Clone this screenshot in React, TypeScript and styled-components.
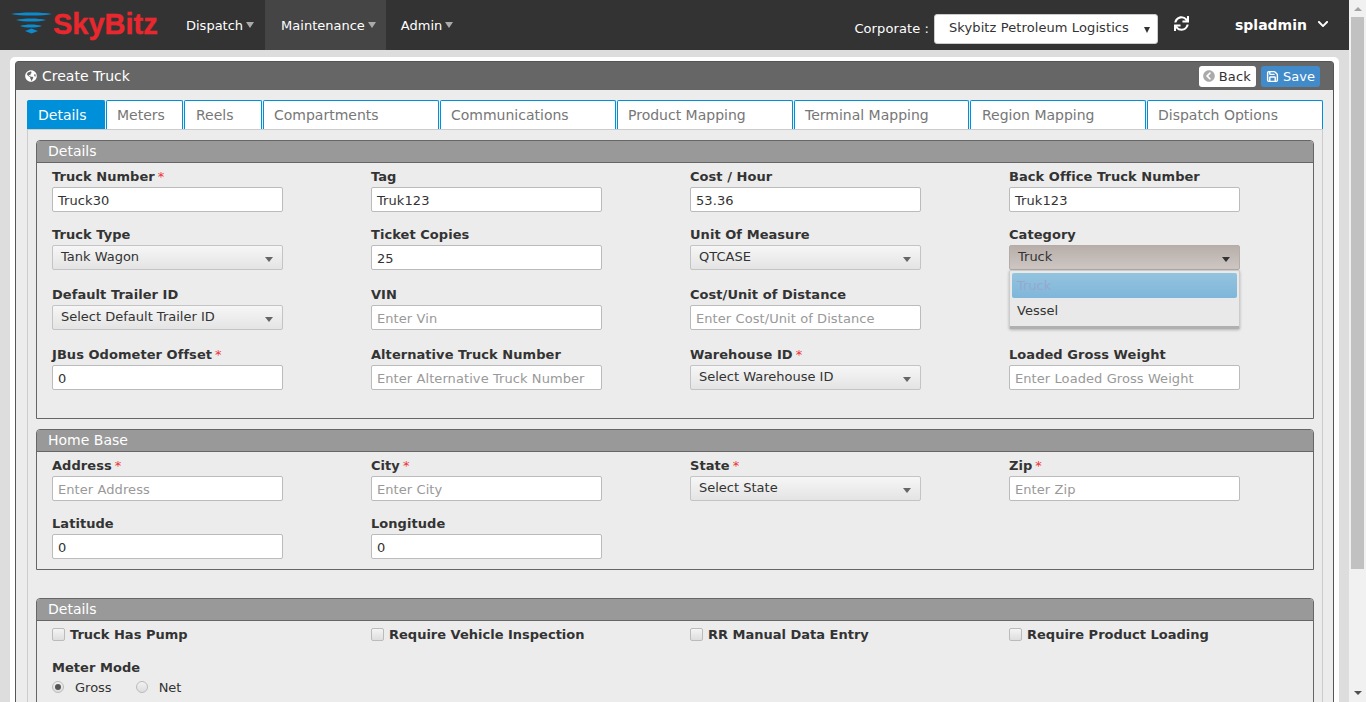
import { createGlobalStyle } from "styled-components";
import styled from "styled-components";
import {
  FaChevronCircleLeft,
  FaChevronDown,
  FaGlobeAmericas,
  FaSync,
} from "react-icons/fa";
import { Save } from "lucide-react";

const GlobalStyle = createGlobalStyle`
  html, body {
    margin: 0;
    height: 702px;
    overflow: hidden;
    background: #ddd;
    font-family: "DejaVu Sans", Verdana, sans-serif;
    font-size: 13px;
    color: #333;
  }
`;

const Page = styled.div`
  display: flex;
  height: 702px;
  overflow: hidden;
`;

const Main = styled.div`
  width: 1349px;
  flex: none;
`;

const Scrollbar = styled.div`
  width: 17px;
  flex: none;
  background: #f1f1f1;
  display: flex;
  flex-direction: column;
  align-items: center;
  .up {
    width: 0;
    height: 0;
    margin-top: 7px;
    border-left: 4px solid transparent;
    border-right: 4px solid transparent;
    border-bottom: 4px solid #a3a3a3;
  }
  .thumb {
    width: 13px;
    height: 552px;
    margin-top: 6px;
    background: #c1c1c1;
  }
  .down {
    width: 0;
    height: 0;
    margin-top: auto;
    margin-bottom: 7px;
    border-left: 4px solid transparent;
    border-right: 4px solid transparent;
    border-top: 4px solid #505050;
  }
`;

const Header = styled.header`
  height: 50px;
  background: #333;
  display: flex;
  align-items: center;
`;

const Logo = styled.div`
  width: 171px;
  box-sizing: border-box;
  flex: none;
  padding-left: 11px;
  display: flex;
  align-items: center;
  svg {
    flex: none;
    margin-right: 1px;
  }
  span {
    font-family: "Liberation Sans", Arial, sans-serif;
    font-weight: 700;
    font-size: 29px;
    -webkit-text-stroke: 0.4px #e8282e;
    color: #e8282e;
    line-height: 50px;
    margin-top: -3px;
  }
`;

const NavItem = styled.div<{ $active?: boolean }>`
  height: 50px;
  padding: ${(p) => (p.$active ? "0 10px 0 16px" : "0 11px 0 15px")};
  display: flex;
  align-items: center;
  color: #fff;
  background: ${(p) => (p.$active ? "#454545" : "transparent")};
  i {
    margin-left: 3px;
    border-left: 4.5px solid transparent;
    border-right: 4.5px solid transparent;
    border-top: 6px solid #aaa;
  }
`;

const Corporate = styled.div`
  margin-left: auto;
  padding-top: 8px;
  display: flex;
  align-items: center;
  color: #fff;
  letter-spacing: 0.1px;
`;

const CorporateLabel = styled.span`
  margin-top: -2px;
`;

const CorporateSelect = styled.div`
  position: relative;
  width: 224px;
  height: 30px;
  margin-left: 5px;
  padding-left: 14px;
  box-sizing: border-box;
  line-height: 26px;
  background: #fff;
  border: 1px solid #ccc;
  border-radius: 3px;
  color: #333;
  i {
    position: absolute;
    right: 7px;
    top: 12px;
    border-left: 3.5px solid transparent;
    border-right: 3.5px solid transparent;
    border-top: 6px solid #333;
  }
`;

const Refresh = styled.div`
  margin: -3px 0 0 16px;
  color: #fff;
  display: flex;
  svg {
    width: 15px;
    height: 15px;
  }
`;

const User = styled.div`
  width: 94px;
  margin: 0 20px 0 46px;
  display: flex;
  align-items: center;
  justify-content: space-between;
  color: #fff;
  font-weight: 700;
  font-size: 14px;
  svg {
    width: 12px;
    height: 12px;
    margin-top: -2px;
  }
`;

const Card = styled.div`
  margin: 7px 10px 0 10px;
  padding: 4px 5px 0;
  height: 660px;
  background: #fff;
  border-radius: 5px 5px 0 0;
`;

const Box = styled.div`
  height: 100%;
  border: 1px solid #555;
  border-bottom: 0;
  border-radius: 4px 4px 0 0;
  background: #ececec;
`;

const TitleBar = styled.div`
  height: 28px;
  padding: 0 13px 0 9px;
  display: flex;
  align-items: center;
  background: #666;
  color: #fff;
  font-size: 14px;
  > svg {
    width: 12px;
    height: 12px;
    margin-right: 5px;
  }
`;

const BackButton = styled.div`
  height: 21px;
  padding: 0 5px 0 4px;
  display: flex;
  align-items: center;
  border-radius: 3px;
  font-size: 13px;
  letter-spacing: 0.2px;
  background: #fff;
  color: #333;
  svg {
    width: 12px;
    height: 12px;
    margin-right: 4px;
    color: #aaa;
  }
`;

const SaveButton = styled.div`
  height: 21px;
  margin-left: 5px;
  padding: 0 5px;
  display: flex;
  align-items: center;
  border-radius: 3px;
  font-size: 13px;
  background: #428bca;
  color: #fff;
  svg {
    width: 13px;
    height: 13px;
    margin-right: 4px;
  }
`;

const Spacer = styled.div`
  flex: 1;
`;

const Tabs = styled.div`
  display: flex;
  gap: 1px;
  margin: 10px 0 0 11px;
  height: 29px;
`;

const Tab = styled.div<{ $active?: boolean; $width: number; $pad: number }>`
  width: ${(p) => p.$width}px;
  box-sizing: border-box;
  padding-left: ${(p) => p.$pad}px;
  line-height: 28px;
  font-size: 14px;
  border: 1px solid #0090d9;
  border-bottom: 0;
  border-radius: 2px 2px 0 0;
  background: ${(p) => (p.$active ? "#0090d9" : "#fff")};
  color: ${(p) => (p.$active ? "#fff" : "#777")};
`;

const TabPanel = styled.div`
  margin-left: 11px;
  margin-right: 10px;
  height: 600px;
  padding: 10px 8px 0;
  border-top: 1px solid #ccc;
  border-left: 1px solid #ccc;
  border-right: 1px solid #ccc;
`;

const Section = styled.section<{ $height: number; $gap: number }>`
  height: ${(p) => p.$height}px;
  box-sizing: border-box;
  margin-bottom: ${(p) => p.$gap}px;
  border: 1px solid #666;
  border-radius: 4px 4px 0 0;
`;

const SectionTitle = styled.div`
  height: 21px;
  line-height: 21px;
  padding-left: 11px;
  font-size: 14px;
  color: #fff;
  background: #999;
  border-bottom: 1px solid #666;
  border-radius: 3px 3px 0 0;
`;

const Row = styled.div<{ $height: number }>`
  display: grid;
  grid-template-columns: repeat(4, 319px);
  height: ${(p) => p.$height}px;
  padding-left: 15px;
`;

const FieldBox = styled.div`
  position: relative;
  width: 231px;
`;

const Label = styled.label`
  display: block;
  height: 24px;
  box-sizing: border-box;
  padding-top: 6px;
  line-height: 16px;
  font-weight: 700;
  letter-spacing: 0.05px;
  color: #333;
  white-space: nowrap;
  b {
    color: #e33;
    font-weight: 400;
    margin-left: 3px;
  }
`;

const Input = styled.div<{ $placeholder?: boolean }>`
  height: 25px;
  box-sizing: border-box;
  padding-left: 5px;
  line-height: 26px;
  letter-spacing: 0.08px;
  background: #fff;
  border: 1px solid #bbb;
  border-radius: 2px;
  color: ${(p) => (p.$placeholder ? "#999" : "#333")};
  white-space: nowrap;
`;

const Select = styled.div<{ $open?: boolean }>`
  position: relative;
  height: 25px;
  box-sizing: border-box;
  padding-left: 8px;
  line-height: 21px;
  border: 1px solid ${(p) => (p.$open ? "#b5aca7" : "#c4c4c4")};
  border-radius: 2px;
  color: #333;
  background: ${(p) =>
    p.$open
      ? "linear-gradient(#b8afaa, #cdc6c2)"
      : "linear-gradient(#f6f6f6, #e4e4e4)"};
  i {
    position: absolute;
    right: 9px;
    top: 11px;
    border-left: 4px solid transparent;
    border-right: 4px solid transparent;
    border-top: 5px solid ${(p) => (p.$open ? "#333" : "#666")};
  }
`;

const Menu = styled.div`
  position: absolute;
  left: 0;
  top: 49px;
  width: 231px;
  height: 59px;
  box-sizing: border-box;
  padding: 2px;
  background: #e9e9e9;
  border: 1px solid #ccc;
  border-bottom: 3px solid #b0b0b0;
  border-radius: 2px;
  box-shadow: 0 1px 3px rgba(0, 0, 0, 0.25);
  z-index: 5;
`;

const MenuItem = styled.div<{ $selected?: boolean }>`
  height: 25px;
  line-height: 25px;
  padding-left: 5px;
  border-radius: 2px;
  background: ${(p) =>
    p.$selected ? "linear-gradient(#94c4de, #7fb6da)" : "transparent"};
  color: ${(p) => (p.$selected ? "#97a8cc" : "#333")};
`;

const Check = styled.div`
  display: flex;
  align-items: center;
  height: 16px;
  margin-top: 5px;
  font-weight: 700;
  white-space: nowrap;
  i {
    width: 11px;
    height: 11px;
    margin-right: 5px;
    background: linear-gradient(#f4f4f4, #dedede);
    border: 1px solid #bbb;
    border-radius: 2px;
  }
`;

const Radios = styled.div`
  display: flex;
  align-items: center;
  height: 16px;
  margin-top: 1px;
`;

const Radio = styled.div<{ $checked?: boolean }>`
  display: flex;
  align-items: center;
  margin-right: 24px;
  i {
    position: relative;
    width: 10px;
    height: 10px;
    margin-right: 11px;
    border: 1px solid #bbb;
    border-radius: 50%;
    background: linear-gradient(#f2f2f2, #ddd);
  }
  i::after {
    content: "";
    display: ${(p) => (p.$checked ? "block" : "none")};
    position: absolute;
    left: 2px;
    top: 2px;
    width: 6px;
    height: 6px;
    border-radius: 50%;
    background: #555;
  }
`;

type Field = {
  label: string;
  required?: boolean;
  value?: string;
  placeholder?: string;
  select?: string;
};

const Control = ({ field }: { field: Field }) => {
  if (field.select) {
    return (
      <Select>
        {field.select}
        <i />
      </Select>
    );
  }
  if (field.placeholder) {
    return <Input $placeholder>{field.placeholder}</Input>;
  }
  return <Input>{field.value}</Input>;
};

const FieldCell = ({ field }: { field: Field }) => (
  <FieldBox>
    <Label>
      {field.label}
      {field.required && <b>*</b>}
    </Label>
    <Control field={field} />
  </FieldBox>
);

const tabs = [
  { name: "Details", width: 78, pad: 10 },
  { name: "Meters", width: 77, pad: 10 },
  { name: "Reels", width: 78, pad: 11 },
  { name: "Compartments", width: 176, pad: 10 },
  { name: "Communications", width: 176, pad: 10 },
  { name: "Product Mapping", width: 176, pad: 10 },
  { name: "Terminal Mapping", width: 175, pad: 10 },
  { name: "Region Mapping", width: 176, pad: 11 },
  { name: "Dispatch Options", width: 176, pad: 10 },
];

const detailRows: { height: number; fields: Field[] }[] = [
  {
    height: 58,
    fields: [
      { label: "Truck Number", required: true, value: "Truck30" },
      { label: "Tag", value: "Truk123" },
      { label: "Cost / Hour", value: "53.36" },
      { label: "Back Office Truck Number", value: "Truk123" },
    ],
  },
  {
    height: 60,
    fields: [
      { label: "Truck Type", select: "Tank Wagon" },
      { label: "Ticket Copies", value: "25" },
      { label: "Unit Of Measure", select: "QTCASE" },
    ],
  },
  {
    height: 60,
    fields: [
      { label: "Default Trailer ID", select: "Select Default Trailer ID" },
      { label: "VIN", placeholder: "Enter Vin" },
      { label: "Cost/Unit of Distance", placeholder: "Enter Cost/Unit of Distance" },
    ],
  },
  {
    height: 50,
    fields: [
      { label: "JBus Odometer Offset", required: true, value: "0" },
      { label: "Alternative Truck Number", placeholder: "Enter Alternative Truck Number" },
      { label: "Warehouse ID", required: true, select: "Select Warehouse ID" },
      { label: "Loaded Gross Weight", placeholder: "Enter Loaded Gross Weight" },
    ],
  },
];

const homeRows: { height: number; fields: Field[] }[] = [
  {
    height: 58,
    fields: [
      { label: "Address", required: true, placeholder: "Enter Address" },
      { label: "City", required: true, placeholder: "Enter City" },
      { label: "State", required: true, select: "Select State" },
      { label: "Zip", required: true, placeholder: "Enter Zip" },
    ],
  },
  {
    height: 50,
    fields: [
      { label: "Latitude", value: "0" },
      { label: "Longitude", value: "0" },
    ],
  },
];

const checks = [
  "Truck Has Pump",
  "Require Vehicle Inspection",
  "RR Manual Data Entry",
  "Require Product Loading",
];

const LogoMark = () => (
  <svg width="41" height="32" viewBox="0 0 41 32">
    <path d="M0 5 C10 3 31 3 41 5 C31 7 10 7 0 5Z" fill="#0a8ccf" />
    <path d="M5 11 C13 9 27 9 35 11 C27 13 13 13 5 11Z" fill="#0a8ccf" />
    <path d="M9 17 C15 15 25 15 31 17 C25 19 15 19 9 17Z" fill="#0a8ccf" />
    <path d="M14 22 L20.5 19.5 L27 22 L20.5 24.5Z" fill="#0a8ccf" />
  </svg>
);

const App = () => (
  <Page>
    <GlobalStyle />
    <Main>
      <Header>
        <Logo>
          <LogoMark />
          <span>SkyBitz</span>
        </Logo>
        <NavItem>
          Dispatch
          <i />
        </NavItem>
        <NavItem $active>
          Maintenance
          <i />
        </NavItem>
        <NavItem>
          Admin
          <i />
        </NavItem>
        <Corporate>
          <CorporateLabel>Corporate :</CorporateLabel>
          <CorporateSelect>
            Skybitz Petroleum Logistics
            <i />
          </CorporateSelect>
        </Corporate>
        <Refresh>
          <FaSync />
        </Refresh>
        <User>
          spladmin
          <FaChevronDown />
        </User>
      </Header>
      <Card>
        <Box>
          <TitleBar>
            <FaGlobeAmericas />
            Create Truck
            <Spacer />
            <BackButton>
              <FaChevronCircleLeft />
              Back
            </BackButton>
            <SaveButton>
              <Save strokeWidth={2.6} />
              Save
            </SaveButton>
          </TitleBar>
          <Tabs>
            {tabs.map((t, i) => (
              <Tab key={t.name} $width={t.width} $pad={t.pad} $active={i === 0}>
                {t.name}
              </Tab>
            ))}
          </Tabs>
          <TabPanel>
            <Section $height={279} $gap={10}>
              <SectionTitle>Details</SectionTitle>
              {detailRows.map((row, r) => (
                <Row key={r} $height={row.height}>
                  {row.fields.map((f) => (
                    <FieldCell key={f.label} field={f} />
                  ))}
                  {r === 1 && (
                    <FieldBox>
                      <Label>Category</Label>
                      <Select $open>
                        Truck
                        <i />
                      </Select>
                      <Menu>
                        <MenuItem $selected>Truck</MenuItem>
                        <MenuItem>Vessel</MenuItem>
                      </Menu>
                    </FieldBox>
                  )}
                </Row>
              ))}
            </Section>
            <Section $height={141} $gap={28}>
              <SectionTitle>Home Base</SectionTitle>
              {homeRows.map((row, r) => (
                <Row key={r} $height={row.height}>
                  {row.fields.map((f) => (
                    <FieldCell key={f.label} field={f} />
                  ))}
                </Row>
              ))}
            </Section>
            <Section $height={120} $gap={0}>
              <SectionTitle>Details</SectionTitle>
              <Row $height={33}>
                {checks.map((c) => (
                  <FieldBox key={c}>
                    <Check>
                      <i />
                      {c}
                    </Check>
                  </FieldBox>
                ))}
              </Row>
              <Row $height={46}>
                <FieldBox>
                  <Label>Meter Mode</Label>
                  <Radios>
                    <Radio $checked>
                      <i />
                      Gross
                    </Radio>
                    <Radio>
                      <i />
                      Net
                    </Radio>
                  </Radios>
                </FieldBox>
              </Row>
            </Section>
          </TabPanel>
        </Box>
      </Card>
    </Main>
    <Scrollbar>
      <div className="up" />
      <div className="thumb" />
      <div className="down" />
    </Scrollbar>
  </Page>
);

export default App;
